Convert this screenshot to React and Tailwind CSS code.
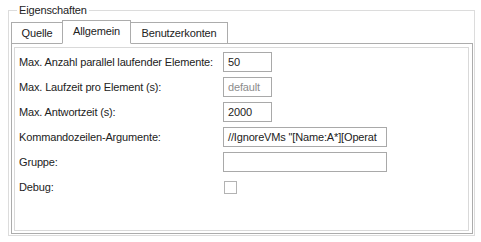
import { clsx } from "clsx";

const rows = [
  { label: "Max. Anzahl parallel laufender Elemente:", value: "50", width: "w-[49px]" },
  { label: "Max. Laufzeit pro Element (s):", placeholder: "default", width: "w-[49px]" },
  { label: "Max. Antwortzeit (s):", value: "2000", width: "w-[49px]" },
  { label: "Kommandozeilen-Argumente:", value: '//IgnoreVMs "[Name:A*][Operat', width: "w-[164px]" },
  { label: "Gruppe:", value: "", width: "w-[164px]" },
];

function Tab({ label, active, className }) {
  return (
    <div
      className={clsx(
        "flex items-center justify-center border-t border-[#acacac] bg-white",
        active ? "h-[24px] border-b border-b-white pb-[1px]" : "h-[22px] border-b",
        className
      )}
    >
      {label}
    </div>
  );
}

export default function App() {
  return (
    <div
      className="w-[481px] h-[242px] bg-white pl-[8px] pt-[10px] text-[11px] leading-[13px] tracking-[-0.15px] text-[#222]"
      style={{ fontFamily: '"Liberation Sans", Arial, sans-serif' }}
    >
      {/* Eigenschaften group box */}
      <div className="relative w-[467px] h-[226px] border border-[#dcdcdc]">
        <span className="absolute left-[8px] -top-[7px] bg-white px-[2px]">Eigenschaften</span>

        <div className="pt-[9px] pl-[2px]">
          {/* tab strip */}
          <div className="flex items-end w-[462px]">
            <Tab label="Quelle" className="w-[51px] border-l border-[#acacac]" />
            <Tab label="Allgemein" active className="w-[69px] border-l border-r border-[#acacac]" />
            <Tab label="Benutzerkonten" className="w-[97px] border-r border-[#acacac]" />
            <div className="flex-1 border-b border-[#acacac]" />
          </div>

          {/* tab page */}
          <div className="w-[462px] h-[190px] border border-t-0 border-[#acacac] pt-[3px] pl-[2px] pr-[3px] pb-[2px]">
            <div className="h-full border border-[#d9d9d9] pt-[4px] pl-[4px] flex flex-col gap-[5px]">
              {rows.map((r) => (
                <div key={r.label} className="flex items-center h-[20px]">
                  <span className="w-[204px] shrink-0">{r.label}</span>
                  <div
                    className={clsx(
                      "h-[20px] border border-[#a9a9a9] pl-[4px] flex items-center overflow-hidden whitespace-nowrap",
                      r.width
                    )}
                  >
                    {r.value ? r.value : <span className="text-[#8c8c8c]">{r.placeholder}</span>}
                  </div>
                </div>
              ))}
              <div className="flex items-center h-[20px]">
                <span className="w-[204px] shrink-0">Debug:</span>
                <div className="w-[13px] h-[13px] border border-[#b3b3b3] ml-[1px]" />
              </div>
            </div>
          </div>
        </div>
      </div>
    </div>
  );
}
